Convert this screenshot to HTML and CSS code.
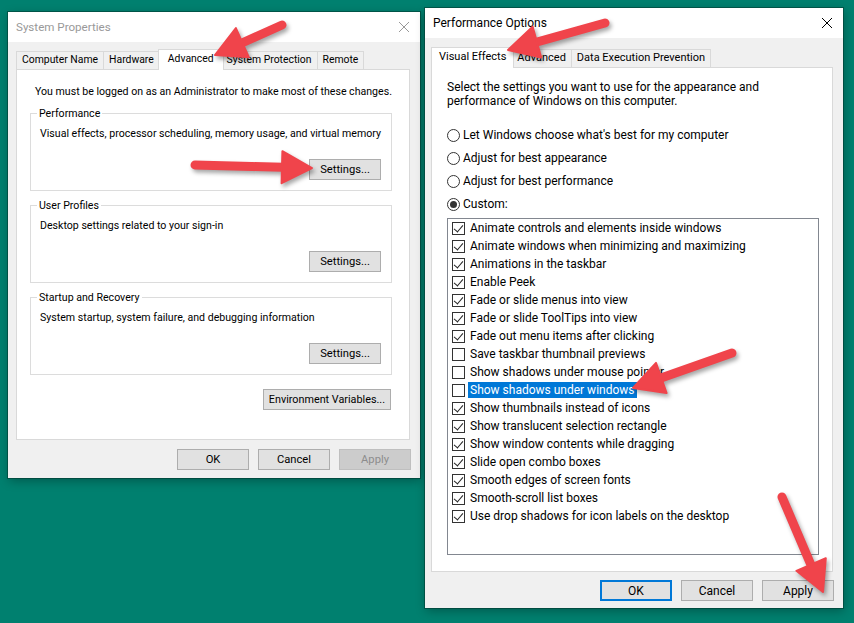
FILE: index.html
```html
<!DOCTYPE html>
<html lang="en">
<head>
    <meta charset="UTF-8">
    <meta name="viewport" content="width=device-width, initial-scale=1.0">
    <title>System Properties - Performance Options</title>
    <link rel="stylesheet" href="styles.css">
</head>
<body>
    <div class="desktop">
        <!-- System Properties (inactive) -->
        <div class="window sys-window inactive">
            <div class="titlebar">
                <span class="title">System Properties</span>
                <svg class="close" width="10" height="10" viewBox="0 0 10 10"><path d="M0 0L10 10M10 0L0 10" stroke="currentColor" stroke-width="1"/></svg>
            </div>
            <div class="window-body">
                <div class="tabs">
                    <div class="tab">Computer Name</div>
                    <div class="tab">Hardware</div>
                    <div class="tab active">Advanced</div>
                    <div class="tab">System Protection</div>
                    <div class="tab">Remote</div>
                </div>
                <div class="tab-panel sys-panel">
                    <p class="intro">You must be logged on as an Administrator to make most of these changes.</p>
                    <fieldset class="group">
                        <legend>Performance</legend>
                        <p>Visual effects, processor scheduling, memory usage, and virtual memory</p>
                        <div class="group-actions"><button class="btn">Settings...</button></div>
                    </fieldset>
                    <fieldset class="group">
                        <legend>User Profiles</legend>
                        <p>Desktop settings related to your sign-in</p>
                        <div class="group-actions"><button class="btn">Settings...</button></div>
                    </fieldset>
                    <fieldset class="group">
                        <legend>Startup and Recovery</legend>
                        <p>System startup, system failure, and debugging information</p>
                        <div class="group-actions"><button class="btn">Settings...</button></div>
                    </fieldset>
                    <div class="env-row"><button class="btn btn-env">Environment Variables...</button></div>
                </div>
                <div class="dialog-buttons">
                    <button class="btn">OK</button>
                    <button class="btn">Cancel</button>
                    <button class="btn" disabled>Apply</button>
                </div>
            </div>
        </div>

        <!-- Performance Options (active) -->
        <div class="window perf-window">
            <div class="titlebar">
                <span class="title">Performance Options</span>
                <svg class="close" width="10" height="10" viewBox="0 0 10 10"><path d="M0 0L10 10M10 0L0 10" stroke="currentColor" stroke-width="1"/></svg>
            </div>
            <div class="window-body">
                <div class="tabs">
                    <div class="tab active">Visual Effects</div>
                    <div class="tab">Advanced</div>
                    <div class="tab">Data Execution Prevention</div>
                </div>
                <div class="tab-panel perf-panel">
                    <p class="perf-intro">Select the settings you want to use for the appearance and<br>performance of Windows on this computer.</p>
                    <div class="radio-list">
                        <div class="radio-row"><span class="radio"></span>Let Windows choose what's best for my computer</div>
                        <div class="radio-row"><span class="radio"></span>Adjust for best appearance</div>
                        <div class="radio-row"><span class="radio"></span>Adjust for best performance</div>
                        <div class="radio-row"><span class="radio checked"></span>Custom:</div>
                    </div>
                    <div class="listbox">
                        <div class="check-row"><span class="checkbox checked"></span>Animate controls and elements inside windows</div>
                        <div class="check-row"><span class="checkbox checked"></span>Animate windows when minimizing and maximizing</div>
                        <div class="check-row"><span class="checkbox checked"></span>Animations in the taskbar</div>
                        <div class="check-row"><span class="checkbox checked"></span>Enable Peek</div>
                        <div class="check-row"><span class="checkbox checked"></span>Fade or slide menus into view</div>
                        <div class="check-row"><span class="checkbox checked"></span>Fade or slide ToolTips into view</div>
                        <div class="check-row"><span class="checkbox checked"></span>Fade out menu items after clicking</div>
                        <div class="check-row"><span class="checkbox"></span>Save taskbar thumbnail previews</div>
                        <div class="check-row"><span class="checkbox"></span>Show shadows under mouse pointer</div>
                        <div class="check-row"><span class="checkbox"></span><span class="selected-text">Show shadows under windows</span></div>
                        <div class="check-row"><span class="checkbox checked"></span>Show thumbnails instead of icons</div>
                        <div class="check-row"><span class="checkbox checked"></span>Show translucent selection rectangle</div>
                        <div class="check-row"><span class="checkbox checked"></span>Show window contents while dragging</div>
                        <div class="check-row"><span class="checkbox checked"></span>Slide open combo boxes</div>
                        <div class="check-row"><span class="checkbox checked"></span>Smooth edges of screen fonts</div>
                        <div class="check-row"><span class="checkbox checked"></span>Smooth-scroll list boxes</div>
                        <div class="check-row"><span class="checkbox checked"></span>Use drop shadows for icon labels on the desktop</div>
                    </div>
                </div>
                <div class="dialog-buttons">
                    <button class="btn btn-default">OK</button>
                    <button class="btn">Cancel</button>
                    <button class="btn">Apply</button>
                </div>
            </div>
        </div>

        <!-- annotation arrows -->
        <svg class="arrows" width="854" height="623" viewBox="0 0 854 623">
            <g class="arrow">
                <line x1="282" y1="25" x2="243" y2="42.5"/>
                <polygon points="215,55 235.9,28.1 248.9,57.3"/>
            </g>
            <g class="arrow">
                <line x1="195" y1="165" x2="283" y2="167.2"/>
                <polygon points="312,168 281.6,183.2 282.4,151.2"/>
            </g>
            <g class="arrow">
                <line x1="605" y1="23" x2="537" y2="42"/>
                <polygon points="508,50 532.6,26.6 541.2,57.4"/>
            </g>
            <g class="arrow">
                <line x1="732" y1="353" x2="661" y2="378"/>
                <polygon points="633,388 656,362.9 666.6,393.1"/>
            </g>
            <g class="arrow">
                <line x1="782" y1="497" x2="811" y2="565"/>
                <polygon points="823,592 796.4,570.8 825.8,558.2"/>
            </g>
        </svg>
    </div>
</body>
</html>
```

FILE: styles.css
```css
* {
    margin: 0;
    padding: 0;
    box-sizing: border-box;
}

body {
    background-color: #00806f;
    font-family: Roboto, "Noto Sans", "Liberation Sans", sans-serif;
    font-size: 12px;
    color: #000;
}

.desktop {
    position: relative;
    width: 854px;
    height: 623px;
    overflow: hidden;
}

/* Windows */
.window {
    position: absolute;
    display: flex;
    flex-direction: column;
    background-color: #f0f0f0;
    box-shadow: 0 0 0 1px rgba(0, 50, 40, 0.5), 1px 3px 10px rgba(0, 0, 0, 0.3);
}

.sys-window {
    left: 8px;
    top: 12px;
    width: 412px;
    height: 466px;
}

.perf-window {
    left: 425px;
    top: 8px;
    width: 418px;
    height: 600px;
}

.titlebar {
    height: 30px;
    flex: none;
    background-color: #ffffff;
    display: flex;
    align-items: center;
    justify-content: space-between;
    padding: 0 11px 0 8px;
}

.inactive .titlebar { color: #999999; }
.sys-window .title { font-size: 11.6px; }

.close { display: block; }

.window-body {
    flex: 1;
    display: flex;
    flex-direction: column;
}

.sys-window .window-body { padding: 7px 9px 0 8px; }
.perf-window .window-body { padding: 9px 9px 0 6px; }

/* Tabs */
.tabs {
    display: flex;
    align-items: flex-end;
    height: 20px;
}

.tab {
    height: 18px;
    line-height: 16px;
    font-size: 11px;
    padding: 0 5px;
    border: 1px solid #d9d9d9;
    border-bottom: none;
    background-color: #f0f0f0;
    margin-left: -1px;
    white-space: nowrap;
}

.sys-window .tab { font-size: 10.4px; padding: 0 5px; }

.tab:first-child { margin-left: 0; }

.tab.active {
    position: relative;
    z-index: 1;
    height: 21px;
    line-height: 17px;
    margin: 0 -2px -1px;
    padding: 0 7px;
    background-color: #ffffff;
}

.sys-window .tab.active { padding: 0 9px; }

.tab.active:first-child { margin-left: 0; }

.tab-panel {
    background-color: #ffffff;
    border: 1px solid #d9d9d9;
    margin-right: 1px;
}

/* System Properties panel */
.sys-panel {
    height: 371px;
    padding: 14px 17px 0 13px;
    font-size: 10.6px;
}

.sys-panel p {
    white-space: nowrap;
}

.intro {
    margin-left: 5px;
    line-height: 15px;
}

.group {
    min-width: 0;
    border: 1px solid #dcdcdc;
    padding: 5px 10px 10px 9px;
    margin-top: 7px;
}

.group legend {
    padding: 0 2px;
    margin-left: -3px;
    line-height: 15px;
}

.group p { line-height: 15px; }

.group-actions {
    display: flex;
    justify-content: flex-end;
    margin-top: 18px;
}

.env-row {
    display: flex;
    justify-content: flex-end;
    margin: 14px 1px 0 0;
}

/* Buttons */
.btn {
    font: inherit;
    font-size: 12px;
    color: #000;
    height: 21px;
    min-width: 72px;
    padding: 0 9px;
    background-color: #e1e1e1;
    border: 1px solid #adadad;
}

.sys-window .btn { font-size: 11.2px; }
.sys-window .btn-env { font-size: 10.8px; padding: 0 5px; }

.btn:disabled {
    background-color: #cccccc;
    border-color: #bfbfbf;
    color: #8c8c8c;
}

.btn-default {
    border-color: #0078d7;
    box-shadow: inset 0 0 0 1px #0078d7;
}

.dialog-buttons {
    display: flex;
    justify-content: flex-end;
    gap: 9px;
    margin-top: 8px;
}

.sys-window .dialog-buttons { margin-top: 9px; }

/* Performance Options panel */
.perf-panel {
    height: 505px;
    padding: 12px 13px 16px 15px;
}

.perf-intro { line-height: 14px; }

.radio-list {
    display: flex;
    flex-direction: column;
    gap: 5px;
    margin-top: 18px;
}

.radio-row {
    height: 18px;
    display: flex;
    align-items: center;
    gap: 3px;
}

.radio {
    width: 13px;
    height: 13px;
    border: 1px solid #333;
    border-radius: 50%;
    background-color: #fff;
    display: flex;
    align-items: center;
    justify-content: center;
}

.radio.checked::after {
    content: "";
    width: 7px;
    height: 7px;
    border-radius: 50%;
    background-color: #333;
}

.listbox {
    margin-top: 5px;
    height: 337px;
    border: 1px solid #828790;
    padding-left: 4px;
    background-color: #fff;
}

.check-row {
    height: 18px;
    display: flex;
    align-items: center;
    gap: 5px;
    white-space: nowrap;
}

.checkbox {
    position: relative;
    flex: none;
    width: 13px;
    height: 13px;
    border: 1px solid #333;
    background-color: #fff;
}

.checkbox.checked::after {
    content: "";
    position: absolute;
    left: 3px;
    top: 0;
    width: 4px;
    height: 8px;
    border: solid #222;
    border-width: 0 1.3px 1.3px 0;
    transform: rotate(40deg);
}

.selected-text {
    background-color: #0078d7;
    color: #fff;
    padding: 1px 2px;
    margin-left: -2px;
}

/* Arrows */
.arrows {
    position: absolute;
    left: 0;
    top: 0;
    pointer-events: none;
    z-index: 10;
    filter: drop-shadow(2px 3px 2px rgba(0, 0, 0, 0.35));
}

.arrow line {
    stroke: #f0444b;
    stroke-width: 9;
    stroke-linecap: round;
}

.arrow polygon {
    fill: #f0444b;
    stroke: #f0444b;
    stroke-width: 2;
    stroke-linejoin: round;
}
```
